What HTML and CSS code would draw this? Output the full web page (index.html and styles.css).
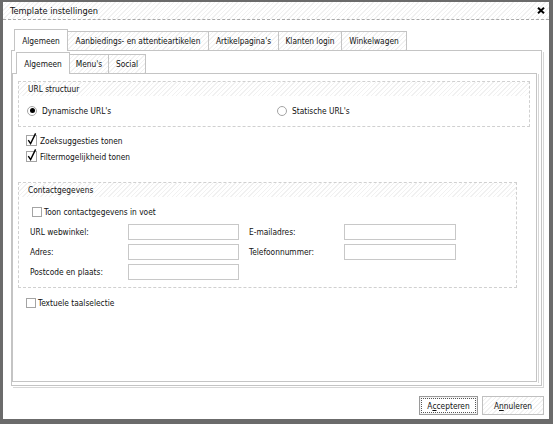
FILE: index.html
```html
<!DOCTYPE html>
<html>
<head>
<meta charset="utf-8">
<link rel="stylesheet" href="styles.css">
</head>
<body>
<div class="window">
  <div class="titlebar">
    <span class="title">Template instellingen</span>
    <svg class="close" width="8" height="7" viewBox="0 0 8 7"><path d="M1 0.8 L7 6.2 M7 0.8 L1 6.2" stroke="#000" stroke-width="2"/></svg>
  </div>
  <div class="body">
    <div class="strip strip-outer">
      <div class="tab active w53">Algemeen</div>
      <div class="tab w141">Aanbiedings- en attentieartikelen</div>
      <div class="tab w70">Artikelpagina's</div>
      <div class="tab w63">Klanten login</div>
      <div class="tab w65">Winkelwagen</div>
    </div>
    <div class="panel-outer">
      <div class="strip strip-inner">
        <div class="tab active w53">Algemeen</div>
        <div class="tab w40">Menu's</div>
        <div class="tab w38">Social</div>
      </div>
      <div class="panel-inner">
        <div class="group group-url">
          <div class="group-head">URL structuur</div>
          <div class="radio-row">
            <label class="opt opt-first"><span class="radio on"></span><span>Dynamische URL's</span></label>
            <label class="opt"><span class="radio"></span><span>Statische URL's</span></label>
          </div>
        </div>
        <div class="check-row first">
          <svg class="cb" width="14" height="14" viewBox="0 0 14 14"><rect x="0.5" y="3.5" width="10" height="10" fill="#fff" stroke="#a4a4a4"/><path d="M2.3 8.2 L4.6 11.6 L9.6 1.4" fill="none" stroke="#000" stroke-width="1.4"/></svg>
          <span>Zoeksuggesties tonen</span>
        </div>
        <div class="check-row">
          <svg class="cb" width="14" height="14" viewBox="0 0 14 14"><rect x="0.5" y="3.5" width="10" height="10" fill="#fff" stroke="#a4a4a4"/><path d="M2.3 8.2 L4.6 11.6 L9.6 1.4" fill="none" stroke="#000" stroke-width="1.4"/></svg>
          <span>Filtermogelijkheid tonen</span>
        </div>
        <div class="group group-contact">
          <div class="group-head">Contactgegevens</div>
          <div class="check-row toon">
            <span class="box"></span>
            <span>Toon contactgegevens in voet</span>
          </div>
          <div class="form-row first">
            <span class="lbl l1">URL webwinkel:</span><span class="input i1"></span>
            <span class="lbl l2">E-mailadres:</span><span class="input i2"></span>
          </div>
          <div class="form-row">
            <span class="lbl l1">Adres:</span><span class="input i1"></span>
            <span class="lbl l2">Telefoonnummer:</span><span class="input i2"></span>
          </div>
          <div class="form-row">
            <span class="lbl l1">Postcode en plaats:</span><span class="input i1"></span>
          </div>
        </div>
        <div class="check-row last">
          <span class="box"></span>
          <span>Textuele taalselectie</span>
        </div>
      </div>
    </div>
    <div class="buttons">
      <div class="btn btn-ok"><span class="focus">A<u>c</u>cepteren</span></div>
      <div class="btn btn-cancel">A<u>n</u>nuleren</div>
    </div>
  </div>
</div>
</body>
</html>
```
FILE: styles.css
```css
* { box-sizing: border-box; }
html, body { margin: 0; padding: 0; background: #fff; }
body {
  font-family: "DejaVu Sans Condensed", "DejaVu Sans", "Liberation Sans", sans-serif;
  font-size: 8.3px;
  color: #111;
}
.window {
  width: 553px;
  height: 424px;
  border-style: solid;
  border-color: #6b6b6b;
  border-width: 2px 4px 5px 3px;
  display: flex;
  flex-direction: column;
  background: #fff;
}
.titlebar, .group-head, .strip .tab:not(.active), .btn-cancel {
  background: repeating-linear-gradient(135deg, #fff 0 2.2px, #f1f1f1 2.2px 3.2px);
}
.titlebar {
  height: 18px;
  border-bottom: 1px dashed #a8a8a8;
  display: flex;
  align-items: center;
  justify-content: space-between;
  padding: 0 4px 1px 7px;
}
.title { font-size: 9.2px; color: #111; }
.close { display: block; }
.body {
  flex: 1;
  padding: 9px 5px 0 8px;
  display: flex;
  flex-direction: column;
}
.strip {
  display: flex;
  align-items: flex-end;
  height: 21px;
}
.strip-outer { padding-left: 3px; }
.strip-inner { padding-left: 4px; margin-top: 1px; }
.tab {
  height: 19px;
  border: 1px solid #c4c4c4;
  border-bottom: 0;
  text-align: center;
  line-height: 19px;
  white-space: nowrap;
  margin-left: -1px;
  color: #111;
}
.tab:first-child { margin-left: 0; }
.tab.active {
  height: 22px;
  line-height: 22px;
  margin-bottom: -1px;
  background: #fff;
  position: relative;
  z-index: 2;
  padding-bottom: 2px;
}
.w53 { width: 54px; }
.w141 { width: 142px; }
.w70 { width: 71px; }
.w63 { width: 64px; }
.w65 { width: 66px; }
.w40 { width: 40px; }
.w38 { width: 38px; }
.panel-outer {
  width: 531px;
  height: 336px;
  border: 1px solid #c4c4c4;
  padding: 0 4px 0 0;
  box-shadow: 1px 1px 0 0 #fff, 2px 2px 0 0 #d6d6d6;
  position: relative;
  z-index: 1;
}
.panel-inner {
  width: 525px;
  height: 309px;
  border: 1px solid #c4c4c4;
  box-shadow: 1px 1px 0 0 #fff, 2px 1px 0 0 #d6d6d6;
  padding: 7px 0 0 5px;
  position: relative;
  z-index: 1;
}
.group { border: 1px dashed #d0d0d0; }
.group-url { width: 512px; height: 46px; }
.group-head {
  height: 14px;
  line-height: 14px;
  padding-left: 9px;
}
.radio-row {
  display: flex;
  align-items: center;
  height: 29px;
  padding-left: 8px;
}
.opt { display: flex; align-items: center; gap: 5px; }
.opt-first { width: 250px; }
.radio {
  width: 10px;
  height: 10px;
  border: 1px solid #a4a4a4;
  border-radius: 50%;
  background: #fff;
  display: flex;
  align-items: center;
  justify-content: center;
}
.radio.on::after {
  content: "";
  width: 5px;
  height: 5px;
  border-radius: 50%;
  background: #000;
}
.check-row {
  display: flex;
  align-items: center;
  height: 16px;
  padding-left: 8px;
  gap: 2px;
}
.check-row.first { margin-top: 6px; }
.cb { display: block; margin-top: -4px; margin-right: -2px; }
.box {
  width: 10px;
  height: 10px;
  border: 1px solid #a4a4a4;
  background: #fff;
}
.group-contact { width: 499px; height: 106px; margin-top: 17px; }
.check-row.toon { padding-left: 13px; margin-top: 7px; }
.form-row {
  display: flex;
  align-items: center;
  height: 16px;
  margin-top: 4px;
  padding-left: 11px;
}
.lbl { white-space: nowrap; }
.l1 { width: 98px; }
.l2 { width: 95px; margin-left: 10px; }
.input {
  height: 16px;
  border: 1px solid #c8c8c8;
  background: #fff;
}
.i1 { width: 111px; }
.i2 { width: 112px; }
.check-row.last { margin-top: 7px; }
.buttons {
  display: flex;
  justify-content: flex-end;
  gap: 4px;
  margin-top: 10px;
}
.btn {
  height: 19px;
  border: 1px solid #c0c0c0;
  display: flex;
  align-items: center;
  justify-content: center;
  color: #111;
}
.btn u { text-decoration: underline; text-underline-offset: 1px; }
.btn-ok { width: 59px; border-color: #9a9a9a; padding: 1px; background: #f4f4f4; }
.btn-ok .focus {
  width: 100%;
  height: 100%;
  border: 1px dotted #555;
  display: flex;
  align-items: center;
  justify-content: center;
  background: #fff;
}
.btn-cancel { width: 62px; }
```
